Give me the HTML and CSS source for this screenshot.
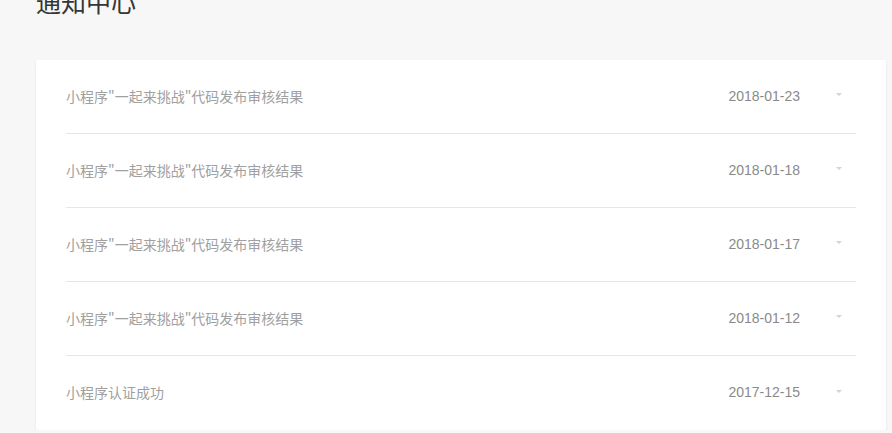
FILE: index.html
```html
<!DOCTYPE html>
<html lang="zh">
<head>
<meta charset="utf-8">
<link rel="stylesheet" href="styles.css">
</head>
<body>
<h1 class="title">通知中心</h1>
<div class="card">
  <div class="row"><span class="subject">小程序"一起来挑战"代码发布审核结果</span><span class="date">2018-01-23</span><span class="caret"></span></div>
  <div class="row"><span class="subject">小程序"一起来挑战"代码发布审核结果</span><span class="date">2018-01-18</span><span class="caret"></span></div>
  <div class="row"><span class="subject">小程序"一起来挑战"代码发布审核结果</span><span class="date">2018-01-17</span><span class="caret"></span></div>
  <div class="row"><span class="subject">小程序"一起来挑战"代码发布审核结果</span><span class="date">2018-01-12</span><span class="caret"></span></div>
  <div class="row"><span class="subject">小程序认证成功</span><span class="date">2017-12-15</span><span class="caret"></span></div>
</div>
</body>
</html>
```

FILE: styles.css
```css
html, body {
  margin: 0;
  padding: 0;
  background: #f7f7f7;
  overflow: hidden;
}
body {
  padding: 0 6px 0 36px;
  font-family: "Liberation Sans", "Noto Sans CJK SC", sans-serif;
}
.title {
  margin: -11px 0 0 0;
  height: 71px;
  font-size: 25px;
  line-height: 25px;
  font-weight: normal;
  color: #353535;
  font-family: "Noto Sans CJK SC", sans-serif;
}
.card {
  background: #fff;
  box-shadow: 0 1px 3px rgba(0,0,0,0.08);
  border-radius: 2px;
}
.row {
  margin: 0 30px;
  height: 71px;
  padding-bottom: 2px;
  border-bottom: 1px solid #e6e6e6;
  display: flex;
  align-items: center;
  padding-right: 14px;
}
.row:last-child {
  border-bottom: none;
  height: 72px;
}
.subject {
  flex: 1;
  font-size: 14px;
  color: #a0a0a0;
  font-family: "Noto Sans CJK SC", sans-serif;
}
.date {
  font-size: 14px;
  color: #8a8a8a;
  font-family: "Liberation Sans", sans-serif;
}
.caret {
  margin-left: 36px;
  width: 0;
  height: 0;
  border-left: 3px solid transparent;
  border-right: 3px solid transparent;
  border-top: 3px solid #d4d4d4;
  margin-top: -2px;
}
```
